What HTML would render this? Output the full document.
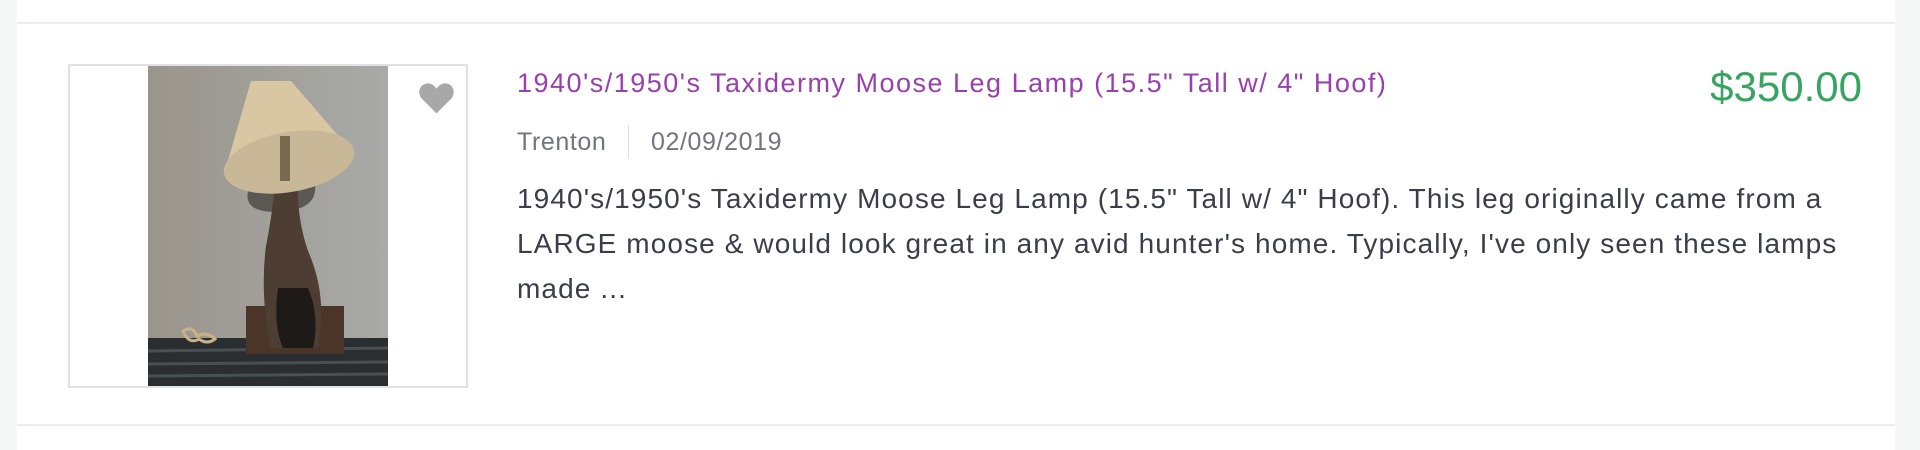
<!DOCTYPE html>
<html><head><meta charset="utf-8"><style>
*{margin:0;padding:0;box-sizing:border-box}
body{width:1920px;height:450px;background:#f6f7f7;position:relative;overflow:hidden;font-family:"Liberation Sans",sans-serif}
.card{position:absolute;left:17px;top:0;width:1878px;height:450px;background:#fff}
.hl{position:absolute;left:17px;width:1878px;height:2px;background:#ececed}
.imgbox{position:absolute;left:68px;top:64px;width:400px;height:324px;border:2px solid #e2e2e3;background:#fff}
.photo{position:absolute;left:148px;top:66px;width:240px;height:320px;overflow:hidden}
.t{position:absolute;white-space:nowrap}
</style></head><body>
<div class="card"></div>
<div class="hl" style="top:22px"></div>
<div class="hl" style="top:424px"></div>
<div class="imgbox"></div>
<div class="photo">
<svg width="240" height="320" viewBox="0 0 240 320">
<defs><linearGradient id="w" x1="0" x2="1"><stop offset="0" stop-color="#9a958c"/><stop offset="1" stop-color="#a9aaa8"/></linearGradient></defs>
<rect width="240" height="320" fill="url(#w)"/>
<rect y="272" width="240" height="48" fill="#2a2e30"/>
<path d="M0 285 L240 282 M0 298 L240 296 M0 310 L240 308" stroke="#4a5052" stroke-width="3"/>
<path d="M100 125 Q95 150 140 145 Q175 140 165 110 Z" fill="#4a4642" opacity=".8"/>
<rect x="98" y="240" width="98" height="48" fill="#4a3528"/>
<path d="M128 110 Q124 150 118 180 Q112 225 122 282 L170 282 Q180 230 160 185 Q148 150 150 110 Z" fill="#4d3d33"/>
<path d="M130 222 Q125 260 135 282 L165 282 Q172 250 160 222 Z" fill="#1e1a18"/>
<path d="M103 15 L143 15 L206 88 Q150 135 77 105 Z" fill="#d9c7a3"/>
<ellipse cx="141" cy="96" rx="66" ry="30" fill="#c8b898" transform="rotate(-10 141 96)"/>
<rect x="132" y="70" width="10" height="45" fill="#7a6a50"/>
<path d="M35 265 q10 -6 14 5 q10 -5 18 3 q-8 6 -16 0 q-10 6 -16 -8z" fill="none" stroke="#c9b18a" stroke-width="3"/>
</svg>
</div>
<svg style="position:absolute;left:418px;top:81px" width="37" height="34" viewBox="0 0 24 22"><path d="M12 21 L2.5 11.5 C-0.5 8.5 0.5 2 6 1.5 C9 1.3 11 3.5 12 5 C13 3.5 15 1.3 18 1.5 C23.5 2 24.5 8.5 21.5 11.5 Z" fill="#a8a8a8"/></svg>
<div class="t" style="left:517px;top:68px;font-size:27px;color:#9a3fae;letter-spacing:1.5px">1940's/1950's Taxidermy Moose Leg Lamp (15.5" Tall w/ 4" Hoof)</div>
<div class="t" style="right:58px;top:63px;font-size:42px;color:#37a462">$350.00</div>
<div class="t" style="left:517px;top:128px;font-size:25px;color:#737480;letter-spacing:0.6px">Trenton</div>
<div style="position:absolute;left:628px;top:125px;width:1px;height:34px;background:#dcdcdf"></div>
<div class="t" style="left:651px;top:128px;font-size:25px;color:#737480;letter-spacing:0.6px">02/09/2019</div>
<div class="t" style="left:517px;top:176px;font-size:28px;color:#3b3d4b;line-height:45px;letter-spacing:1.1px">1940's/1950's Taxidermy Moose Leg Lamp (15.5" Tall w/ 4" Hoof). This leg originally came from a<br>LARGE moose &amp; would look great in any avid hunter's home. Typically, I've only seen these lamps<br>made ...</div>
</body></html>
